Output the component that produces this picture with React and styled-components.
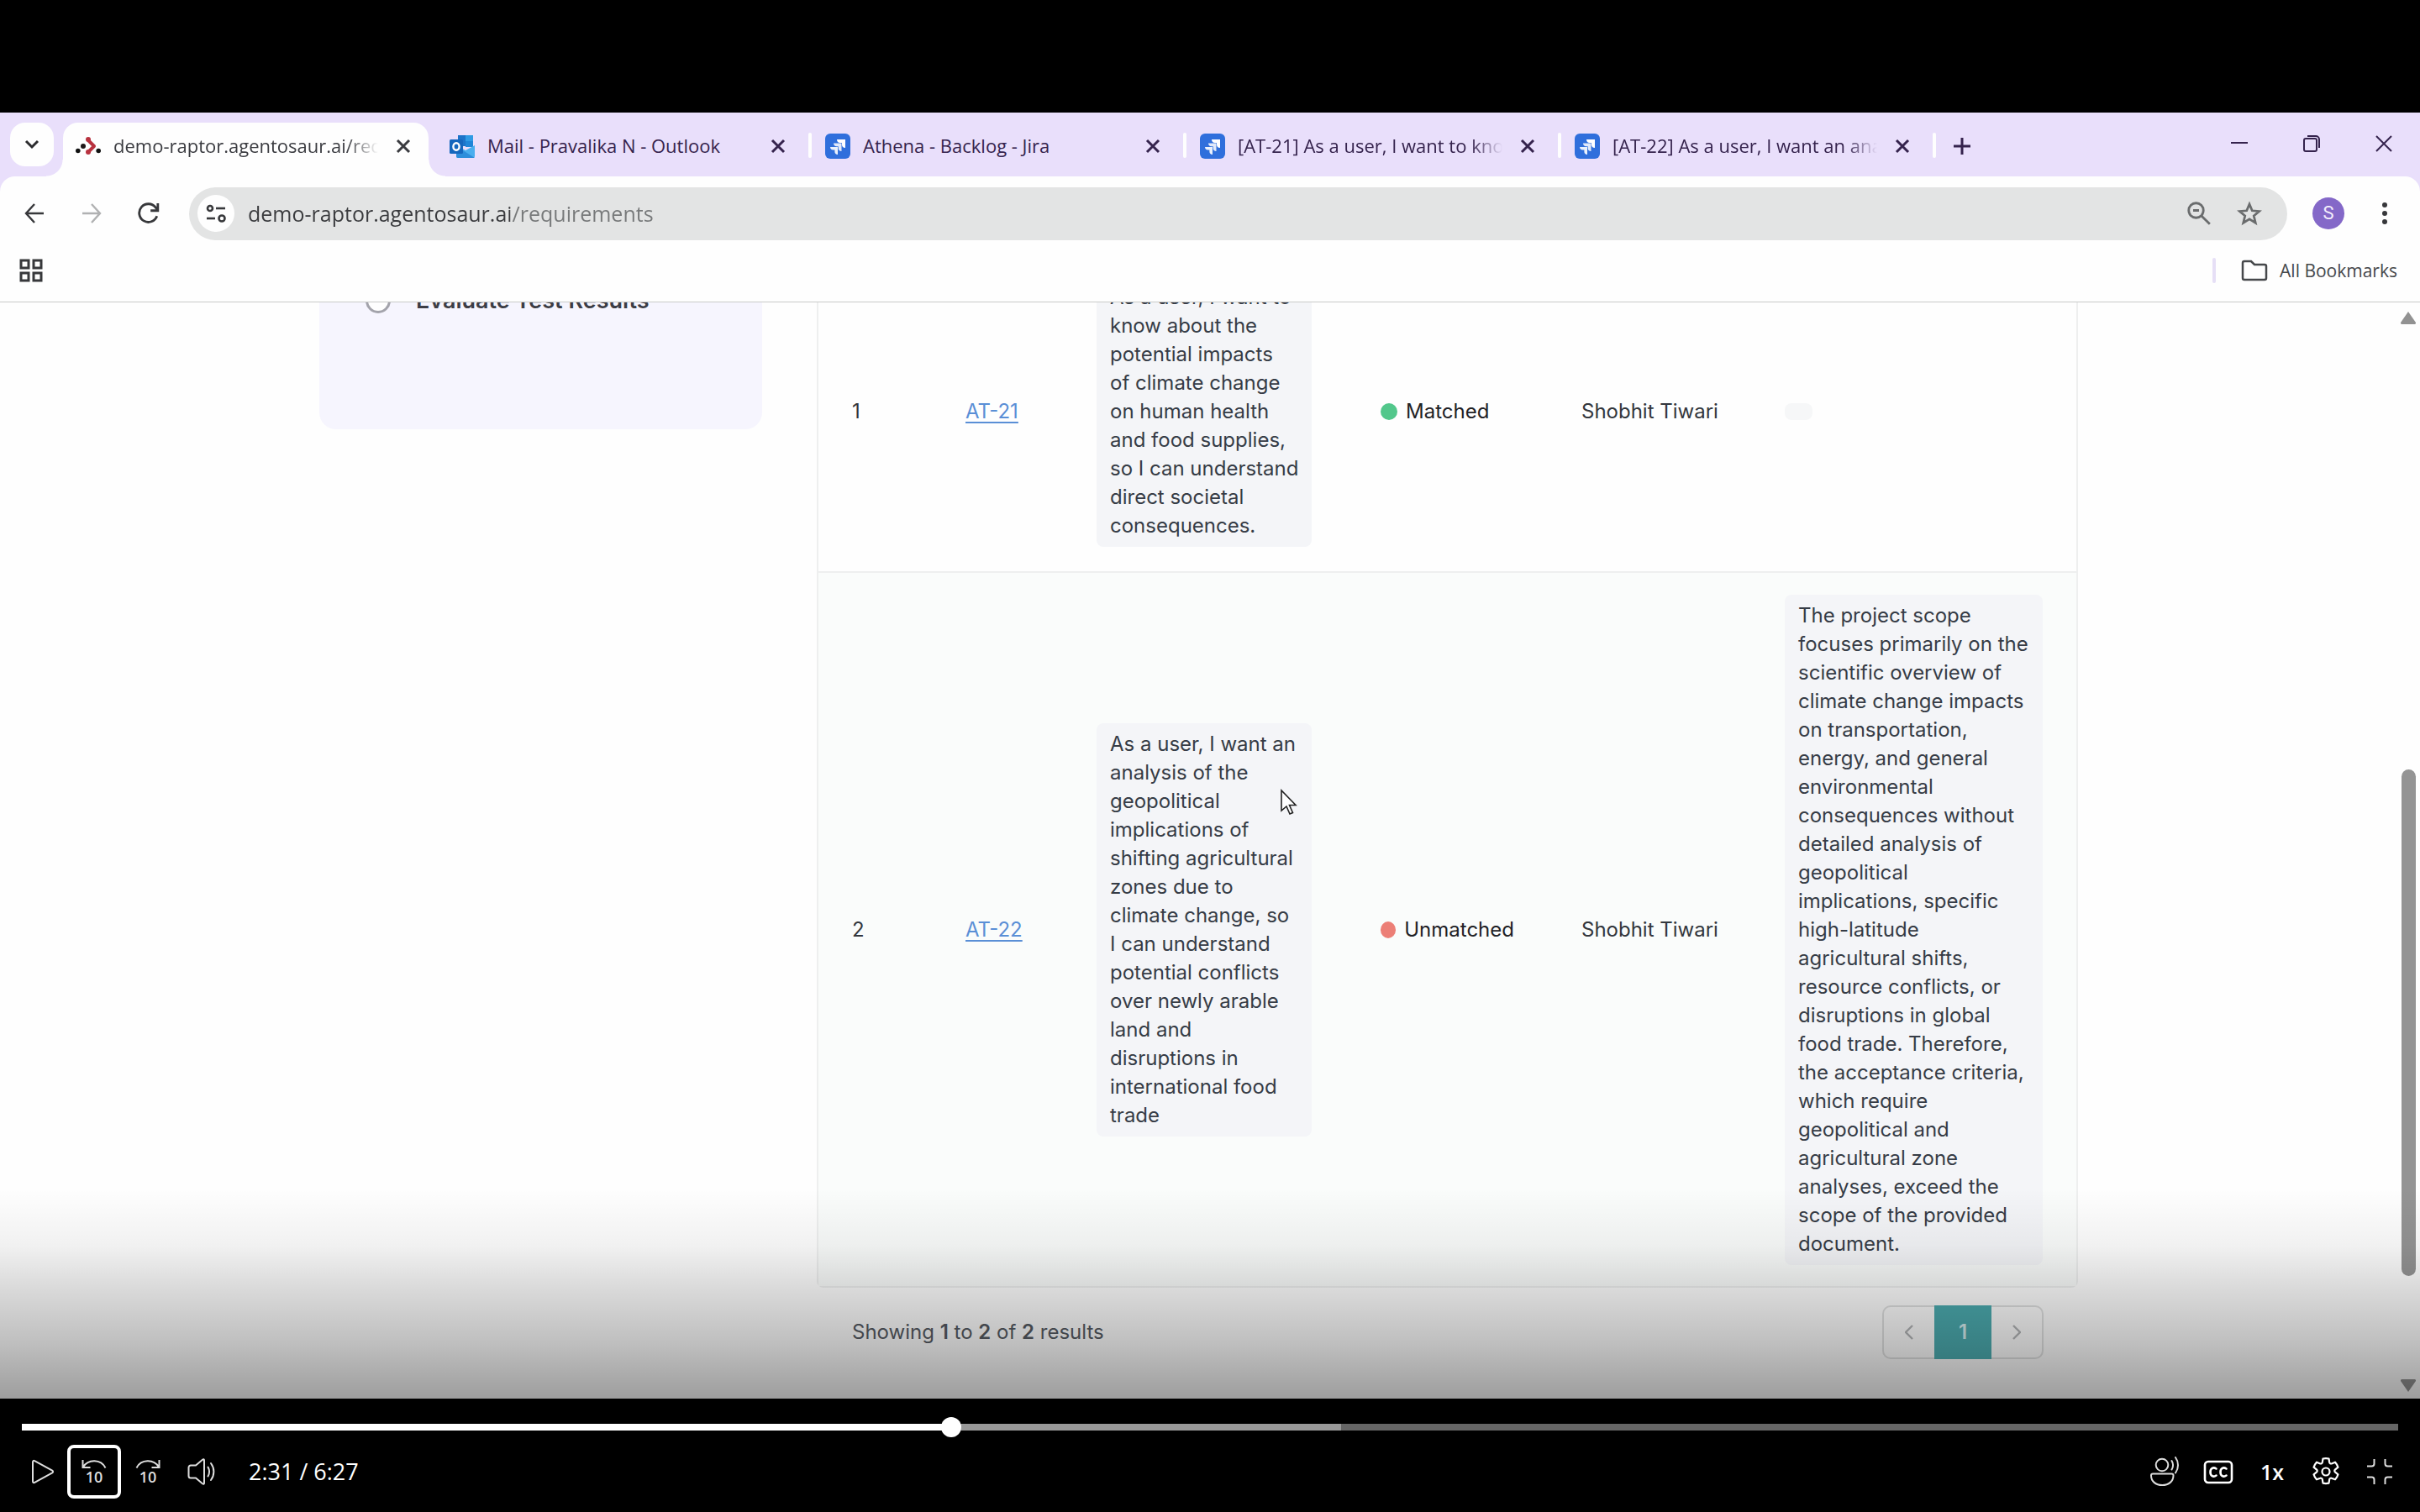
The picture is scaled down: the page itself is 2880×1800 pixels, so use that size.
import React from "react";
import styled, { createGlobalStyle, css } from "styled-components";

const ui = `"Open Sans", "Noto Sans", sans-serif`;
const inter = `Inter, "Liberation Sans", sans-serif`;

const Global = createGlobalStyle`
  *, *::before, *::after { box-sizing: border-box; }
  body { margin: 0; background: #000; }
  button, input { font: inherit; margin: 0; }
  button { border: 0; padding: 0; background: none; color: inherit; cursor: pointer; }
`;

const Player = styled.div`
  position: relative;
  display: flex;
  flex-direction: column;
  height: 100vh;
  padding-top: 134px;
  background: #000;
  font-family: ${ui};
`;

const Browser = styled.section`
  position: relative;
  flex: 1;
  min-height: 0;
  display: flex;
  flex-direction: column;
  overflow: hidden;
  background: #fefefe;
`;

const Shade = styled.div`
  position: absolute;
  inset: auto 0 0 0;
  height: 250px;
  pointer-events: none;
  background: linear-gradient(
    to bottom,
    rgba(0, 0, 0, 0) 0%,
    rgba(0, 0, 0, 0.05) 27%,
    rgba(0, 0, 0, 0.14) 47%,
    rgba(0, 0, 0, 0.25) 74%,
    rgba(0, 0, 0, 0.38) 100%
  );
`;

/* ---------- tab strip ---------- */

const TabStrip = styled.header`
  display: flex;
  flex: none;
  height: 76px;
  padding: 12px 0 0 12px;
  background: #e9dffb;
  color: #35234d;
`;

const TabSearch = styled.button`
  display: grid;
  place-items: center;
  width: 52px;
  height: 52px;
  margin-right: 11px;
  border-radius: 18px;
  background: #fefefe;
  color: #2b2b2e;
`;

const Tab = styled.div`
  position: relative;
  display: flex;
  align-items: center;
  height: 56px;
  padding: 0 21px 0 15px;
  gap: 15px;
  ${(p) =>
    p.$active
      ? css`
          height: 64px;
          padding: 0 15px 8px 15px;
          margin-right: 10px;
          border-radius: 18px 18px 0 0;
          background: #fefefe;
          color: #3a3b40;
          &::before,
          &::after {
            content: "";
            position: absolute;
            bottom: 0;
            width: 20px;
            height: 20px;
          }
          &::before {
            right: 100%;
            background: radial-gradient(circle at 0 0, transparent 19px, #fefefe 20px);
          }
          &::after {
            left: 100%;
            background: radial-gradient(circle at 100% 0, transparent 19px, #fefefe 20px);
          }
        `
      : ""}
`;

const TabTitle = styled.button`
  flex: 1;
  overflow: hidden;
  padding-bottom: 2px;
  text-align: left;
  white-space: nowrap;
  font-size: 22px;
  line-height: 32px;
  ${(p) =>
    p.$fade
      ? css`
          mask-image: linear-gradient(to right, #000 88%, transparent 100%);
        `
      : ""}
`;

const IconButton = styled.button`
  display: grid;
  place-items: center;
  flex: none;
  width: ${(p) => p.$size || 30}px;
  height: ${(p) => p.$size || 30}px;
  color: ${(p) => p.$color || "inherit"};
`;

const TabDivider = styled.span`
  flex: none;
  width: 4px;
  height: 30px;
  margin: 12px 1px 0 0;
  border-radius: 2px;
  background: #fefefe;
`;

const TabGroup = styled.div`
  display: flex;
  width: ${(p) => p.$width}px;
  ${Tab} {
    flex: 1;
    min-width: 0;
  }
`;

const NewTab = styled(IconButton)`
  margin: 8px 0 0 10px;
`;

const WindowControls = styled.div`
  display: flex;
  align-items: center;
  gap: 46px;
  height: 50px;
  margin-left: auto;
  padding-right: 23px;
`;

/* ---------- address row ---------- */

const ToolbarWrap = styled.div`
  flex: none;
  background: #e9dffb;
`;

const Toolbar = styled.div`
  display: flex;
  align-items: center;
  height: 88px;
  padding: 0 22px 0 21px;
  border-radius: 18px 18px 0 0;
  background: #fefefe;
  color: #37383b;
`;

const NavButtons = styled.nav`
  display: flex;
  gap: 28px;
  margin-right: 28px;
`;

const AddressBar = styled.div`
  flex: 1;
  display: flex;
  align-items: center;
  height: 63px;
  padding: 0 30px 0 10px;
  border-radius: 32px;
  background: #e3e4e4;
  color: #6a6c6d;
`;

const SiteInfo = styled.button`
  display: grid;
  place-items: center;
  width: 44px;
  height: 44px;
  margin-right: 16px;
  border-radius: 50%;
  background: #fefefe;
  color: #37383b;
`;

const AddressInput = styled.input`
  flex: 1;
  height: 40px;
  padding: 0;
  border: 0;
  outline: 0;
  font-size: 25px;
  line-height: 40px;
  color: #55575a;
  background: linear-gradient(to right, #3a3b3e 312px, #77797a 312px);
  background-clip: text;
  -webkit-text-fill-color: transparent;
`;

const AddressActions = styled.div`
  display: flex;
  gap: 30px;
`;

const Avatar = styled.button`
  width: 38px;
  height: 38px;
  margin: 0 28px 0 30px;
  border-radius: 50%;
  background: #8468c8;
  color: #f4effc;
  font-family: Roboto, sans-serif;
  font-size: 22px;
  line-height: 38px;
`;

const Bookmarks = styled.div`
  flex: none;
  display: flex;
  align-items: center;
  justify-content: space-between;
  height: 62px;
  padding: 0 27px 13px 22px;
  border-bottom: 1px solid #c9cac9;
  background: #fefefe;
  color: #46484b;
`;

const BookmarkFolder = styled.div`
  display: flex;
  align-items: center;
  gap: 30px;
  button {
    display: flex;
    align-items: center;
    gap: 14px;
    font-size: 21px;
    line-height: 30px;
  }
`;

const Rule = styled.span`
  width: 4px;
  height: 30px;
  border-radius: 2px;
  background: #e6dff6;
`;

/* ---------- web page ---------- */

const Viewport = styled.main`
  flex: 1;
  min-height: 0;
  display: flex;
  overflow: hidden;
  font-family: ${inter};
`;

const Content = styled.div`
  flex: 1;
  display: grid;
  grid-template-columns: 527px minmax(0, 1fr);
  align-items: start;
  gap: 65px;
  margin-top: -63px;
  padding: 0 379px 0 380px;
`;

const Steps = styled.aside`
  height: 214px;
  padding: 44px 55px;
  border-radius: 20px;
  background: #f6f5fe;
`;

const Step = styled.label`
  display: flex;
  align-items: center;
  gap: 30px;
  font-size: 27px;
  font-weight: 600;
  line-height: 34px;
  color: #3c3d45;
  input {
    appearance: none;
    width: 30px;
    height: 30px;
    border: 3px solid #a3a3ab;
    border-radius: 50%;
    background: #fefefe;
  }
`;

const Table = styled.table`
  width: 100%;
  table-layout: fixed;
  border-collapse: separate;
  border-spacing: 0;
  border: 2px solid #eeefef;
  border-radius: 0 0 8px 8px;
  font-size: 24px;
  line-height: 34px;
  color: #33373d;
`;

const Row = styled.tr`
  height: ${(p) => p.$height}px;
  background: ${(p) => (p.$tint ? "#fafcfb" : "#fefefe")};
  td {
    padding: 0 40px;
    vertical-align: middle;
    white-space: nowrap;
    border-bottom: ${(p) => (p.$tint ? "0" : "2px solid #eeefef")};
  }
`;

const Col = styled.col`
  width: ${(p) => (p.$w ? `${p.$w}px` : "auto")};
`;

const IssueLink = styled.a`
  color: #5a8fd6;
  text-decoration: underline;
  text-decoration-thickness: 2px;
  text-underline-offset: 4px;
`;

const Note = styled.div`
  width: ${(p) => p.$width}px;
  padding: 8px 14px 8px 16px;
  border-radius: 8px;
  background: #f4f5f8;
  color: #363c46;
  white-space: normal;
`;

const EmptyNote = styled.div`
  width: 33px;
  height: 20px;
  border-radius: 8px;
  background: #f6f7f8;
`;

const Status = styled.span`
  display: flex;
  align-items: center;
  gap: 10px;
  color: #1f2226;
  &::before {
    content: "";
    width: 20px;
    height: 20px;
    border-radius: 50%;
    background: ${(p) => p.$color};
  }
`;

const TableFooter = styled.footer`
  display: flex;
  align-items: center;
  justify-content: space-between;
  height: 106px;
  padding: 0 41px 0 42px;
  font-size: 24px;
  line-height: 34px;
  color: #565b63;
  b {
    font-weight: 600;
  }
`;

const Pager = styled.div`
  display: flex;
  height: 64px;
  border: 2px solid #e0e1e1;
  border-radius: 10px;
  color: #b4b6b8;
`;

const PageButton = styled.button`
  display: grid;
  place-items: center;
  width: ${(p) => (p.$current ? 68 : 60)}px;
  ${(p) =>
    p.$current
      ? css`
          margin: -2px 0;
          background: #4cacb0;
          color: #d6eff0;
          font-weight: 600;
        `
      : ""}
`;

const Scrollbar = styled.div`
  display: flex;
  flex-direction: column;
  align-items: center;
  width: 28px;
  padding: 11px 0 8px;
  svg {
    flex: none;
    color: #929292;
  }
`;

const Thumb = styled.span`
  width: 17px;
  height: 603px;
  margin: auto 0 123px;
  border-radius: 9px;
  background: #949494;
`;

const Cursor = styled.svg`
  position: absolute;
  left: 1523px;
  top: 805px;
`;

/* ---------- playback controls ---------- */

const Controls = styled.footer`
  flex: none;
  height: 135px;
  padding: 22px 16px 0;
  color: #fff;
`;

const Seek = styled.input`
  appearance: none;
  display: block;
  width: calc(100% - 20px);
  height: 24px;
  margin: 0 10px 9px;
  background: linear-gradient(to right, #fff 39%, #999 39%, #999 55.5%, #666 55.5%) center / 100% 8px no-repeat;
  outline: 0;
  &::-webkit-slider-thumb {
    appearance: none;
    width: 24px;
    height: 24px;
    border-radius: 50%;
    background: #fff;
  }
`;

const ControlRow = styled.div`
  display: flex;
  align-items: center;
`;

const Control = styled.button`
  display: grid;
  place-items: center;
  width: 64px;
  height: 64px;
  border: 4px solid ${(p) => (p.$focused ? "#fff" : "transparent")};
  border-radius: 8px;
  font-size: 25px;
  font-weight: 600;
  line-height: 32px;
`;

const Time = styled.span`
  flex: 1;
  padding-left: 24px;
  font-size: 27px;
  line-height: 36px;
`;

/* ---------- drawings ---------- */

const Svg = ({ s = 24, w, h, box = "0 0 24 24", sw = 2, children }) => (
  <svg width={w || s} height={h || s} viewBox={box} fill="none" stroke="currentColor" strokeWidth={sw} aria-hidden="true">
    {children}
  </svg>
);

const CloseIcon = () => (
  <Svg s={18} box="0 0 18 18" sw={3}><path d="M2 2l14 14M16 2L2 16" /></Svg>
);

const RaptorIcon = () => (
  <Svg s={30} box="0 0 30 30" sw={3}>
    <path d="M15 8l7 7-7 7" stroke="#b8323f" strokeWidth="4" strokeLinejoin="round" />
    <g stroke="none">
      <circle cx="15" cy="7" r="3" fill="#b8323f" />
      <circle cx="15" cy="22" r="3" fill="#b8323f" />
      <circle cx="9" cy="15" r="3" fill="#1d1718" />
      <circle cx="2.8" cy="20.5" r="2.8" fill="#111" />
      <circle cx="27.2" cy="20.5" r="2.8" fill="#111" />
    </g>
  </Svg>
);

const OutlookIcon = () => (
  <Svg s={30} box="0 0 30 30" sw={0}>
    <g stroke="none">
      <path d="M10 2h18v13H10z" fill="#1c74c9" />
      <path d="M19 2h9v7h-9z" fill="#2f9be4" />
      <path d="M19 9h9v7h-9z" fill="#1f86d8" />
      <path d="M8 14l11 6 11-6v13a2 2 0 0 1-2 2H10a2 2 0 0 1-2-2z" fill="#4aaeee" />
      <path d="M8 15l22 14H10a2 2 0 0 1-2-2z" fill="#2d8edb" />
      <rect x="0" y="7" width="16" height="17" rx="1.5" fill="#1567bd" />
    </g>
    <ellipse cx="8" cy="15.500" rx="3.600" ry="4.200" stroke="#fff" strokeWidth="2.400" />
  </Svg>
);

const JiraIcon = () => (
  <Svg s={30} box="0 0 30 30" sw={0}>
    <g stroke="none">
      <rect width="30" height="30" rx="6" fill="#2f6fdc" />
      <g fill="#fff">
        <path d="M14 7h10v10c-2.600 0-4-1.600-4-3.700V11h-2.200C15.500 11 14 9.500 14 7z" />
        <path d="M10 11.500h9.500v9.500c-2.400 0-3.800-1.500-3.800-3.500v-2.200h-2c-2.200 0-3.700-1.500-3.700-3.800z" opacity=".85" />
        <path d="M6 16h9v9c-2.200 0-3.600-1.400-3.600-3.300v-2.100H9.500C7.400 19.600 6 18.200 6 16z" opacity=".9" />
      </g>
    </g>
  </Svg>
);

const SkipArrow = ({ forward }) => (
  <svg width="32" height="32" viewBox="0 0 32 32" fill="none" stroke="#ddd" strokeWidth="2" aria-hidden="true">
    <g transform={forward ? "translate(32 0) scale(-1 1)" : undefined}>
      <path d="M2.500 2v9h9M3 10.500C9 .8 24 .8 29.500 11.500" />
    </g>
    <text x="16" y="29" textAnchor="middle" fill="#ddd" stroke="none" fontSize="18" fontFamily="Open Sans, sans-serif">10</text>
  </svg>
);

const tabs = [
  { title: "demo-raptor.agentosaur.ai/requ", icon: RaptorIcon, active: true, fade: true, width: 445 },
  { title: "Mail - Pravalika N - Outlook", icon: OutlookIcon, width: 442 },
  { title: "Athena - Backlog - Jira", icon: JiraIcon, divider: true, width: 446 },
  { title: "[AT-21] As a user, I want to know", icon: JiraIcon, divider: true, fade: true, width: 446 },
  { title: "[AT-22] As a user, I want an ana", icon: JiraIcon, divider: true, fade: true, width: 446 },
];

const rows = [
  {
    n: 1, id: "AT-21", height: 383, status: "Matched", color: "#52c78b", owner: "Shobhit Tiwari",
    story: "As a user, I want to know about the potential impacts of\u00a0climate change on human health and food supplies, so I can understand direct societal consequences.",
  },
  {
    n: 2, id: "AT-22", height: 849, tint: true, status: "Unmatched", color: "#ec7f76", owner: "Shobhit Tiwari",
    story: "As a user, I want an analysis of the geopolitical implications of shifting agricultural zones due to climate change, so I can understand potential conflicts over newly arable land and disruptions in international food trade",
    reason: "The project scope focuses primarily on the scientific overview of climate change impacts on transportation, energy, and general environmental consequences without detailed analysis of geopolitical implications, specific high-latitude agricultural shifts, resource conflicts, or disruptions in global food trade. Therefore, the acceptance criteria, which require geopolitical and agricultural zone analyses, exceed the scope of the provided document.",
  },
];

function BrowserTab({ tab }) {
  const Icon = tab.icon;
  return (
    <TabGroup $width={tab.width}>
      {tab.divider && <TabDivider />}
      <Tab $active={tab.active}>
        <Icon />
        <TabTitle $fade={tab.fade}>{tab.title}</TabTitle>
        <IconButton aria-label="Close tab"><CloseIcon /></IconButton>
      </Tab>
    </TabGroup>
  );
}

function BrowserChrome() {
  return (
    <>
      <TabStrip>
        <TabSearch aria-label="Search tabs">
          <Svg s={18} box="0 0 18 18" sw={3}><path d="M2 5l7 7 7-7" /></Svg>
        </TabSearch>
        {tabs.map((t) => <BrowserTab key={t.title} tab={t} />)}
        <TabDivider />
        <NewTab aria-label="New tab" $size={40}>
          <Svg s={20} box="0 0 20 20" sw={3}><path d="M10 0v20M0 10h20" /></Svg>
        </NewTab>
        <WindowControls>
          <IconButton aria-label="Minimize" $size={40}>
            <Svg s={20} box="0 0 20 20"><path d="M0 9h20" /></Svg>
          </IconButton>
          <IconButton aria-label="Restore" $size={40}>
            <Svg s={20} box="0 0 20 20">
              <rect x="1" y="4" width="15" height="15" rx="2" />
              <path d="M5 1h10a4 4 0 0 1 4 4v10" />
            </Svg>
          </IconButton>
          <IconButton aria-label="Close window" $size={40}>
            <Svg s={20} box="0 0 20 20"><path d="M1 1l18 18M19 1L1 19" /></Svg>
          </IconButton>
        </WindowControls>
      </TabStrip>
      <ToolbarWrap>
        <Toolbar>
          <NavButtons>
            <IconButton aria-label="Back" $size={40}>
              <Svg s={24} sw={2.4}><path d="M23 12H2M12 1L2 12l10 11" /></Svg>
            </IconButton>
            <IconButton aria-label="Forward" $size={40} $color="#b0b1b2">
              <Svg s={24} sw={2.4}><path d="M1 12h21M12 1l10 11-10 11" /></Svg>
            </IconButton>
            <IconButton aria-label="Reload" $size={40}>
              <Svg s={26} sw={2.6}><path d="M21 15a10 10 0 1 1-1.500-9.500L22 8M22 1v8h-8" /></Svg>
            </IconButton>
          </NavButtons>
          <AddressBar>
            <SiteInfo aria-label="Site information">
              <Svg s={24} sw={2.6}>
                <circle cx="5" cy="6" r="3" /><path d="M12 6h11" />
                <circle cx="19" cy="18" r="3.500" /><path d="M1 18h10" />
              </Svg>
            </SiteInfo>
            <AddressInput aria-label="Address" defaultValue="demo-raptor.agentosaur.ai/requirements" />
            <AddressActions>
              <IconButton aria-label="Zoom">
                <Svg s={28} sw={2.4}><circle cx="9" cy="9" r="7.500" /><path d="M14.500 14.500L23 23M6 9h6" /></Svg>
              </IconButton>
              <IconButton aria-label="Bookmark this page">
                <Svg s={30} sw={2.2}><path d="M12 3.200l2.600 6.200 6.700.6-5.100 4.400 1.600 6.600-5.800-3.500-5.800 3.500 1.600-6.600L2.700 10l6.700-.6z" /></Svg>
              </IconButton>
            </AddressActions>
          </AddressBar>
          <Avatar aria-label="Profile">S</Avatar>
          <IconButton aria-label="Menu" $size={40}>
            <svg width="8" height="28" viewBox="0 0 8 28" fill="currentColor" aria-hidden="true">
              <circle cx="4" cy="4" r="3" /><circle cx="4" cy="14" r="3" /><circle cx="4" cy="24" r="3" />
            </svg>
          </IconButton>
        </Toolbar>
      </ToolbarWrap>
      <Bookmarks>
        <IconButton aria-label="Apps" $color="#37383b">
          <Svg s={28} box="0 0 28 28" sw={3}>
            <path d="M2 2h9v9H2zM17 2h9v9h-9zM2 17h9v9H2zM17 17h9v9h-9z" />
          </Svg>
        </IconButton>
        <BookmarkFolder>
          <Rule />
          <button>
            <Svg w={32} h={26} box="0 0 32 26" sw={2.5}>
              <path d="M2 4a2 2 0 0 1 2-2h8l4 4h12a2 2 0 0 1 2 2v14a2 2 0 0 1-2 2H4a2 2 0 0 1-2-2z" />
            </Svg>
            All Bookmarks
          </button>
        </BookmarkFolder>
      </Bookmarks>
    </>
  );
}

function Requirements() {
  return (
    <Viewport>
      <Content>
        <Steps>
          <Step><input type="radio" name="step" />Evaluate Test Results</Step>
        </Steps>
        <div>
          <Table>
            <colgroup>
              <Col $w={135} /><Col $w={156} /><Col $w={338} /><Col $w={239} /><Col $w={242} /><Col />
            </colgroup>
            <tbody>
              {rows.map((r) => (
                <Row key={r.id} $height={r.height} $tint={r.tint}>
                  <td>{r.n}</td>
                  <td><IssueLink href="#">{r.id}</IssueLink></td>
                  <td><Note $width={256}>{r.story}</Note></td>
                  <td><Status $color={r.color}>{r.status}</Status></td>
                  <td>{r.owner}</td>
                  <td>{r.reason ? <Note $width={307}>{r.reason}</Note> : <EmptyNote />}</td>
                </Row>
              ))}
            </tbody>
          </Table>
          <TableFooter>
            <span>Showing <b>1</b> to <b>2</b> of <b>2</b> results</span>
            <Pager>
              <PageButton aria-label="Previous page">
                <Svg w={10} h={18} box="0 0 10 18" sw={2.4}><path d="M9 1L1 9l8 8" /></Svg>
              </PageButton>
              <PageButton $current>1</PageButton>
              <PageButton aria-label="Next page">
                <Svg w={10} h={18} box="0 0 10 18" sw={2.4}><path d="M1 1l8 8-8 8" /></Svg>
              </PageButton>
            </Pager>
          </TableFooter>
        </div>
      </Content>
      <Scrollbar>
        <svg width="18" height="15" viewBox="0 0 18 15" fill="currentColor" aria-hidden="true"><path d="M9 0l9 13a2 2 0 0 1-1 2H1a2 2 0 0 1-1-2z" /></svg>
        <Thumb />
        <svg width="18" height="15" viewBox="0 0 18 15" fill="currentColor" aria-hidden="true"><path d="M9 15L0 2a2 2 0 0 1 1-2h16a2 2 0 0 1 1 2z" /></svg>
      </Scrollbar>
    </Viewport>
  );
}

function Playback() {
  return (
    <Controls>
      <Seek type="range" aria-label="Seek" min="0" max="387" defaultValue="151" />
      <ControlRow>
        <Control aria-label="Play">
          <svg width="34" height="34" viewBox="0 0 34 34" fill="none" stroke="#ddd" strokeWidth="2" strokeLinejoin="round" aria-hidden="true">
            <path d="M8 5.500v23c0 1.500 1 2 2.200 1.300l21-11.400c1.200-.7 1.200-2 0-2.700l-21-11.500C9 3.500 8 4 8 5.500z" />
          </svg>
        </Control>
        <Control aria-label="Back 10 seconds" $focused><SkipArrow /></Control>
        <Control aria-label="Forward 10 seconds"><SkipArrow forward /></Control>
        <Control aria-label="Volume">
          <svg width="34" height="34" viewBox="0 0 34 34" fill="none" stroke="#ddd" strokeWidth="2" strokeLinejoin="round" aria-hidden="true">
            <path d="M20 3.500v27c0 1.500-1 1.500-2 .7L10 24.500H4a2.500 2.500 0 0 1-2.500-2.500V12A2.500 2.500 0 0 1 4 9.500h6l8-6.700c1-.8 2-.8 2 .7z" />
            <path d="M24.500 11.500c2 3.500 2 7.500 0 11M28 7c4.500 6 4.500 14 0 20" strokeLinecap="round" />
          </svg>
        </Control>
        <Time>2:31 / 6:27</Time>
        <Control aria-label="Immersive reader">
          <svg width="36" height="36" viewBox="0 0 36 36" fill="none" stroke="#ddd" strokeWidth="2" strokeLinecap="round" aria-hidden="true">
            <circle cx="15" cy="10" r="7.300" />
            <path d="M4 20.500h22.500c1.300 0 2 .8 2 2 0 7-5.500 11.500-13.300 11.500S2 29.500 2 22.500c0-1.200.7-2 2-2zM26.500 5c1.800 3 1.800 7.500 0 10.500M31 1c4 5.500 4 13 0 18.500" />
          </svg>
        </Control>
        <Control aria-label="Captions">
          <svg width="36" height="30" viewBox="0 0 36 30" fill="none" stroke="#fff" strokeWidth="2.600" strokeLinecap="round" aria-hidden="true">
            <rect x="2" y="3" width="32" height="25" rx="4" />
            <path d="M15.500 11.500c-3.500-2.500-7-.5-7 4s3.500 6.500 7 4M27.500 11.500c-3.500-2.500-7-.5-7 4s3.500 6.500 7 4" />
          </svg>
        </Control>
        <Control>1x</Control>
        <Control aria-label="Settings">
          <svg width="36" height="36" viewBox="0 0 36 36" fill="none" stroke="#fff" strokeWidth="2.200" strokeLinejoin="round" aria-hidden="true">
            <circle cx="18" cy="18" r="4.500" />
            <path d="M14.500 2.500c2.300-.6 4.700-.6 7 0l.7 4.500c.2 1 1.500 1.800 2.500 1.400l4.300-1.700c1.600 1.800 2.800 3.700 3.500 6l-3.600 3c-.8.700-.8 2 0 2.700l3.600 2.900c-.7 2.300-1.900 4.300-3.500 6l-4.300-1.600c-1-.4-2.300.4-2.500 1.400l-.7 4.500c-2.300.6-4.700.6-7 0l-.7-4.500c-.2-1-1.500-1.800-2.500-1.400L7 27.300c-1.600-1.700-2.800-3.700-3.500-6l3.600-2.900c.8-.7.8-2 0-2.700l-3.600-3c.7-2.300 1.900-4.200 3.500-6l4.300 1.700c1 .4 2.300-.4 2.500-1.400z" />
          </svg>
        </Control>
        <Control aria-label="Exit full screen">
          <svg width="32" height="32" viewBox="0 0 32 32" fill="none" stroke="#ddd" strokeWidth="2" aria-hidden="true">
            <path d="M9.500 1v5.500a3 3 0 0 1-3 3H1M22.500 1v5.500a3 3 0 0 0 3 3H31M9.500 31v-5.500a3 3 0 0 0-3-3H1M22.500 31v-5.500a3 3 0 0 1 3-3H31" />
          </svg>
        </Control>
      </ControlRow>
    </Controls>
  );
}

export default function App() {
  return (
    <Player>
      <Global />
      <Browser>
        <BrowserChrome />
        <Requirements />
        <Cursor width="22" height="32" viewBox="0 0 22 32" fill="#fff" stroke="#222" strokeWidth="1.600" aria-hidden="true">
          <path d="M2 2v24l6-5 4 9 3.500-1.500-4-9H19z" />
        </Cursor>
        <Shade />
      </Browser>
      <Playback />
    </Player>
  );
}
